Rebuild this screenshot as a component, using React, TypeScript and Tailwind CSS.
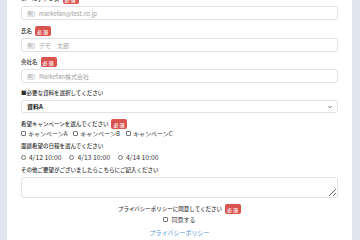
import { ChevronDown } from "lucide-react";

function Badge() {
  return (
    <span className="inline-flex items-center justify-center h-[10px] w-[16px] rounded-[2px] bg-[#d9534f] text-white text-[5px] leading-none tracking-[1px]">
      必須
    </span>
  );
}

function Label({ text, required }: { text: string; required?: boolean }) {
  return (
    <div className="flex items-center gap-[3px] h-[10px] text-[5.5px] text-[#333] font-medium">
      <span>{text}</span>
      {required && <Badge />}
    </div>
  );
}

function Field({ label, placeholder }: { label: string; placeholder: string }) {
  return (
    <div className="flex flex-col gap-[2px]">
      <Label text={label} required />
      <input
        placeholder={placeholder}
        className="h-[14px] w-full rounded-[3px] border border-[#e2e2e2] px-[5px] text-[6px] placeholder:text-[#a0a0a0] outline-none"
      />
    </div>
  );
}

export default function App() {
  const campaigns = ["キャンペーンA", "キャンペーンB", "キャンペーンC"];
  const dates = ["4/12 10:00", "4/13 10:00", "4/14 10:00"];

  return (
    <div
      className="w-[360px] h-[240px] overflow-hidden flex bg-[#e0e6ef]"
      style={{ fontFamily: '"Noto Sans CJK JP", "Noto Sans", sans-serif' }}
    >
      <div className="ml-[7px] w-[345px] h-full bg-white px-[14px]">
        <div className="-mt-[6px] flex flex-col">
          <Field label="メールアドレス" placeholder="例）markefan@test.co.jp" />
          <div className="mt-[6px]">
            <Field label="氏名" placeholder="例）デモ　太郎" />
          </div>
          <div className="mt-[5px]">
            <Field label="会社名" placeholder="例）Markefan株式会社" />
          </div>

          <div className="mt-[5px] flex flex-col gap-[2px]">
            <Label text="■必要な資料を選択してください" />
            <div className="relative h-[13px] rounded-[3px] border border-[#e2e2e2] flex items-center px-[5px]">
              <span className="text-[6px] font-bold text-[#222]">資料A</span>
              <ChevronDown className="absolute right-[4px] w-[6px] h-[6px] text-[#444]" strokeWidth={3} />
            </div>
          </div>

          <div className="mt-[6px] flex flex-col">
            <Label text="希望キャンペーンを選んでください" required />
            <div className="flex items-center gap-[6px] h-[9px] text-[6px] text-[#333]">
              {campaigns.map((c) => (
                <label key={c} className="flex items-center gap-[2px]">
                  <span className="w-[5px] h-[5px] border border-[#777] rounded-[1px]" />
                  {c}
                </label>
              ))}
            </div>
          </div>

          <div className="mt-[3px] flex flex-col gap-[2px]">
            <Label text="面談希望の日程を選んでください" />
            <div className="flex items-center gap-[8px] h-[9px] text-[6.8px] text-[#333]">
              {dates.map((d) => (
                <label key={d} className="flex items-center gap-[3px]">
                  <span className="w-[5px] h-[5px] border border-[#777] rounded-full" />
                  {d}
                </label>
              ))}
            </div>
          </div>

          <div className="mt-[3px] flex flex-col gap-[2px]">
            <Label text="その他ご要望がございましたらこちらにご記入ください" />
            <textarea className="h-[21px] w-full rounded-[3px] border border-[#e2e2e2] resize-y outline-none" />
          </div>

          <div className="mt-[6px] flex flex-col items-center">
            <Label text="プライバシーポリシーに同意してください" required />
            <label className="flex items-center gap-[3px] h-[10px] text-[6px] text-[#333]">
              <span className="w-[5px] h-[5px] border border-[#777] rounded-[1px]" />
              同意する
            </label>
            <a className="mt-[4px] text-[6px] text-[#4a8fd6]">プライバシーポリシー</a>
          </div>
        </div>
      </div>
    </div>
  );
}
